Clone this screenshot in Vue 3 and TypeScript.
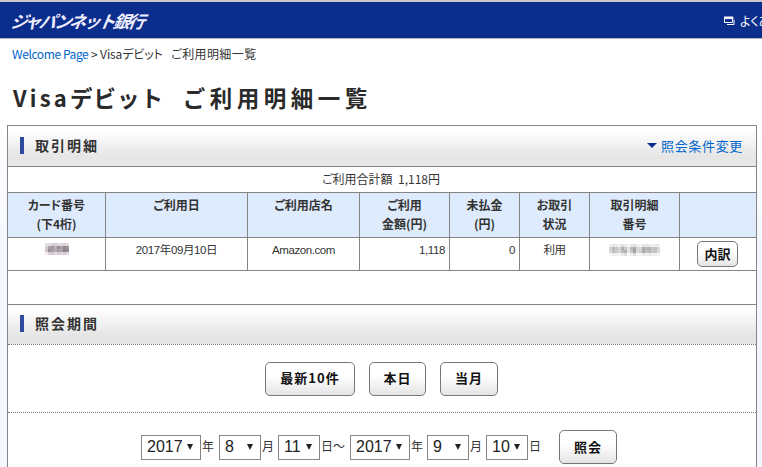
<script setup lang="ts">
const toColor = (v: number) => `rgb(${v + 4},${v - 4},${v + 2})`
const card = [
  230, 222, 212, 210, 222, 218, 214, 224,
  208, 166, 156, 182, 146, 166, 138, 154,
  202, 150, 166, 174, 160, 168, 134, 144,
  238, 212, 208, 222, 208, 216, 208, 222,
].map(toColor)
const toGray = (v: number) => `rgb(${v},${v},${v})`
const trans = [
  238, 228, 234, 240, 224, 234, 244, 234, 226, 238, 244, 230, 228, 234, 240, 234, 238,
  212, 182, 202, 216, 174, 204, 228, 186, 172, 212, 216, 174, 186, 178, 200, 192, 216,
  216, 190, 204, 214, 188, 176, 230, 202, 160, 218, 208, 170, 192, 184, 198, 196, 218,
  246, 238, 240, 246, 234, 224, 246, 240, 222, 244, 244, 232, 238, 236, 240, 238, 246,
].map(toGray)
const cols = [
  { lines: ['カード番号', '(下4桁)'] },
  { lines: ['ご利用日'] },
  { lines: ['ご利用店名'] },
  { lines: ['ご利用', '金額(円)'] },
  { lines: ['未払金', '(円)'] },
  { lines: ['お取引', '状況'] },
  { lines: ['取引明細', '番号'] },
  { lines: [''] },
]
const quick = ['最新10件', '本日', '当月']
</script>

<template>
  <div class="page">
    <header class="topbar">
      <span class="logo">ジャパンネット銀行</span>
      <span class="faq">
        <svg class="win" width="11" height="9" viewBox="0 0 11 9"><path d="M0.5 1.5h8v5h-8zM0 1h9v1.6H0zM10 3.5v5H3" fill="none" stroke="#fff" stroke-width="1"/></svg>
        よくあるご質問
      </span>
    </header>
    <nav class="crumb"><a class="link">Welcome Page</a> &gt; Visaデビット<span class="crumb-sp">&nbsp;&nbsp;</span><span class="crumb-kanji">ご利用明細一覧</span></nav>
    <h1 class="title"><span class="latin">Visa</span><span class="kana">デビット</span><span class="sp">&nbsp;</span>ご利用明細一覧</h1>
    <section class="panel">
      <div class="head">
        <h2 class="head-title">取引明細</h2>
        <a class="change"><i class="tri"></i>照会条件変更</a>
      </div>
      <div class="sum">ご利用合計額&nbsp; 1,118円</div>
      <div class="grid">
        <div v-for="(c, i) in cols" :key="i" class="th">
          <div v-for="l in c.lines" :key="l" class="thl">{{ l }}</div>
        </div>
        <div class="td c"><span class="mosaic m8"><i v-for="(m, i) in card" :key="i" :style="{ background: m }"></i></span></div>
        <div class="td c">2017年09月10日</div>
        <div class="td c">Amazon.com</div>
        <div class="td r">1,118</div>
        <div class="td r">0</div>
        <div class="td c">利用</div>
        <div class="td c"><span class="mosaic m17"><i v-for="(m, i) in trans" :key="i" :style="{ background: m }"></i></span></div>
        <div class="td c"><button class="btn small">内訳</button></div>
      </div>
      <div class="spacer"></div>
      <div class="head dotted">
        <h2 class="head-title">照会期間</h2>
      </div>
      <div class="quick">
        <button v-for="q in quick" :key="q" class="btn">{{ q }}</button>
      </div>
      <div class="period">
        <span class="sel w60">2017<i class="arr"></i></span><span class="u u18">年</span>
        <span class="sel w42">8<i class="arr"></i></span><span class="u u17">月</span>
        <span class="sel w42">11<i class="arr"></i></span><span class="u u30">日～</span>
        <span class="sel w60">2017<i class="arr"></i></span><span class="u u17">年</span>
        <span class="sel w42">9<i class="arr"></i></span><span class="u u17">月</span>
        <span class="sel w42">10<i class="arr"></i></span><span class="u u31">日</span>
        <button class="btn go">照会</button>
      </div>
    </section>
  </div>
</template>

<style>
html, body { margin: 0; background: #fff; overflow: hidden; }
</style>

<style scoped>
.page { width: 762px; height: 467px; overflow: hidden; font-family: "Noto Sans CJK JP", "Noto Sans", sans-serif; color: #333; font-size: 12px; background: linear-gradient(#fff 0, #fff 130px, #f4f7fe 240px, #f4f7fe 100%); }
.topbar { height: 36px; border-top: 2px solid #c8c8c8; border-bottom: 1px solid #b4b4b4; background: #0b2d8c; display: flex; align-items: center; justify-content: space-between; padding-left: 11px; white-space: nowrap; }
.logo { color: #eef; font-size: 17px; font-weight: 700; font-style: italic; letter-spacing: -2.3px; display: block; transform: skewX(-10deg); }
.faq { color: #fff; font-size: 12px; display: flex; align-items: center; gap: 5px; width: 38px; flex: none; font-feature-settings: "palt"; }
.win { flex: none; }
.crumb { margin: 7px 0 0 12px; height: 16px; line-height: 16px; font-size: 12px; color: #333; font-feature-settings: "palt"; letter-spacing: -0.1px; }
.link { color: #0066cc; letter-spacing: -0.4px; }
.crumb-sp { letter-spacing: 1.5px; }
.crumb-kanji { letter-spacing: 0.4px; }
.title { margin: 21px 0 0 13px; height: 28px; line-height: 28px; font-size: 22.5px; font-weight: 700; letter-spacing: 4.5px; color: #2a2a2a; white-space: nowrap; }
.latin { letter-spacing: 3.2px; font-size: 22px; }
.kana { letter-spacing: 1px; }
.sp { letter-spacing: 13.5px; }
.panel { margin: 14px 0 0 7px; width: 748px; border: 1px solid #858585; border-bottom: 0; background: #fff; }
.head { height: 38px; padding: 0 13px 2px 12px; background: linear-gradient(#fff 0, #fff 10%, #e6e6e6 75%, #e6e6e6 100%); border-bottom: 1px solid #858585; display: flex; align-items: center; justify-content: space-between; }
.head.dotted { height: 37px; border-bottom: 1px dotted #777; }
.head-title { margin: 0; padding-left: 11px; border-left: 4px solid #2f4ba0; height: 17px; line-height: 17px; font-size: 14px; font-weight: 700; letter-spacing: 2px; color: #333; }
.change { color: #0066cc; font-size: 13px; letter-spacing: 0.67px; display: flex; align-items: center; gap: 4px; }
.tri { width: 0; height: 0; border-left: 5px solid transparent; border-right: 5px solid transparent; border-top: 5px solid #0b2d8c; }
.sum { height: 25px; line-height: 23px; text-align: center; font-size: 12px; border-bottom: 1px solid #858585; font-feature-settings: "palt"; padding-right: 2px; }
.grid { display: grid; grid-template-columns: 98px 142px 112px 90px 70px 70px 90px 1fr; }
.th { background: #deebfc; height: 42px; border-right: 1px solid #858585; border-bottom: 1px solid #858585; text-align: center; padding-top: 2px; font-weight: 700; font-size: 12px; color: #333; font-feature-settings: "palt"; }
.th:nth-child(8) { border-right: 0; }
.thl { height: 19px; line-height: 19px; }
.td { height: 32px; border-right: 1px solid #858585; border-bottom: 1px solid #858585; font-size: 11.5px; line-height: 25px; font-family: "Liberation Sans", "Noto Sans CJK JP", sans-serif; letter-spacing: -0.4px; }
.td:nth-child(16) { border-right: 0; padding-right: 1px; }
.c { text-align: center; }
.r { text-align: right; padding-right: 4px; }
.mosaic { display: grid; grid-auto-rows: 3px; width: fit-content; margin: 5px auto 0; }
.m8 { grid-template-columns: repeat(8, 3px); }
.m17 { grid-template-columns: repeat(17, 3px); margin-top: 6px; }
.mosaic i { display: block; }
.btn { box-sizing: border-box; font-family: inherit; font-weight: 700; font-size: 13px; color: #111; border: 1px solid #777; border-radius: 5px; background: linear-gradient(#fff, #fff 40%, #e4e4e4); padding: 0 0 2px; letter-spacing: 1px; }
.small { width: 41px; height: 26px; margin-top: 3px; display: inline-block; vertical-align: top; letter-spacing: 0; }
.spacer { height: 33px; border-bottom: 1px solid #858585; }
.quick { height: 67px; border-bottom: 1px dotted #777; display: flex; align-items: center; justify-content: center; gap: 14px; padding-right: 1px; box-sizing: content-box; }
.quick .btn { height: 34px; }
.quick .btn:nth-child(1) { width: 90px; }
.quick .btn:nth-child(2) { width: 57px; }
.quick .btn:nth-child(3) { width: 58px; }
.period { height: 68px; display: flex; align-items: center; justify-content: center; padding-right: 6px; }
.sel { box-sizing: border-box; height: 25px; border: 1px solid #858585; font-family: "Liberation Sans", sans-serif; font-size: 16px; padding: 0 7px 0 5px; display: flex; align-items: center; justify-content: space-between; color: #222; flex: none; }
.w60 { width: 60px; }
.w42 { width: 42px; }
.arr { width: 0; height: 0; border-left: 3px solid transparent; border-right: 3px solid transparent; border-top: 6px solid #222; }
.u { font-size: 12px; flex: none; white-space: nowrap; padding: 0 0 4px 1px; box-sizing: border-box; }
.u17 { width: 17px; }
.u18 { width: 18px; }
.u30 { width: 30px; }
.u31 { width: 31px; }
.go { width: 58px; height: 34px; flex: none; }
</style>
